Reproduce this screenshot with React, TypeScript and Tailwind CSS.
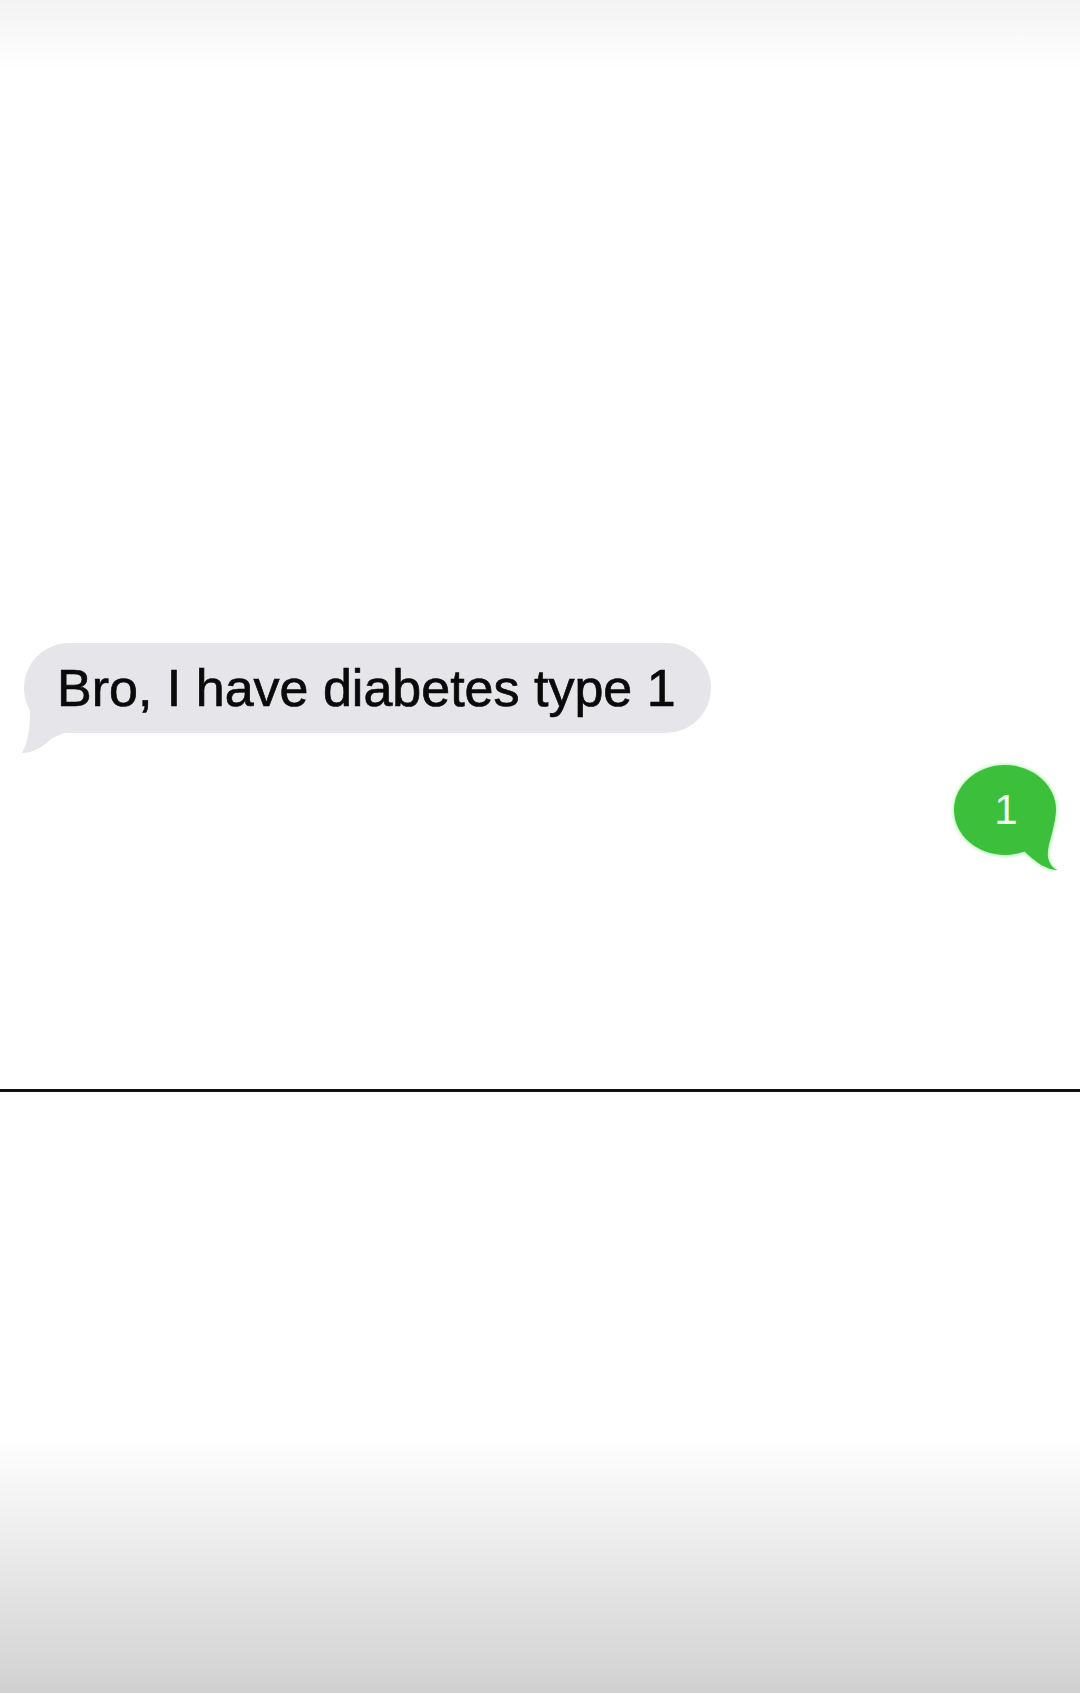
export default function App() {
  return (
    <div className="flex h-[1693px] w-full flex-col bg-white font-['Liberation_Sans',Arial,sans-serif]">
      {/* top fade */}
      <div className="h-[70px] shrink-0 bg-linear-to-b from-[#f3f3f3] to-white" />

      {/* received message */}
      <div className="mt-[573px] flex">
        <div className="relative ml-[24px] flex h-[90px] w-[687px] items-center rounded-full bg-[#e5e5ea] pl-[33px]">
          <svg
            className="absolute left-[-6px] top-[57px]"
            width="62"
            height="56"
            viewBox="0 0 62 56"
          >
            <path
              d="M14 0 L12 12 C12 30 10 42 4 53 C16 53 26 46 34 38 L46 33 L46 0 Z"
              fill="#e5e5ea"
            />
          </svg>
          <span className="relative text-[52px] text-[#0a0a0a] [-webkit-text-stroke:0.7px_#0a0a0a]">
            Bro, I have diabetes type 1
          </span>
        </div>
      </div>

      {/* sent message */}
      <div className="mt-[24px] flex">
        <div className="relative ml-[945px] h-[122px] w-[122px]">
          <svg
            className="drop-shadow-[0_0_2px_#86ee86]"
            width="122"
            height="122"
            viewBox="0 0 122 122"
          >
            <g fill="#3cc03c">
              <ellipse cx="60" cy="53" rx="51" ry="45" />
              <path d="M110 60 C108 80 100 92 104 104 C106 109 109 112 113 113 C102 113 91 106 78 93 Z" />
            </g>
          </svg>
          <span className="absolute left-[61px] top-[53px] -translate-x-1/2 -translate-y-1/2 text-[42px] leading-none text-[#eefbee]">
            1
          </span>
        </div>
      </div>

      {/* divider */}
      <div className="mt-[210px] h-[3px] w-full bg-[#111]" />

      <div className="flex-1" />

      {/* bottom fade */}
      <div className="h-[256px] shrink-0 bg-linear-to-b from-white to-[#d1d1d1]" />
    </div>
  );
}
